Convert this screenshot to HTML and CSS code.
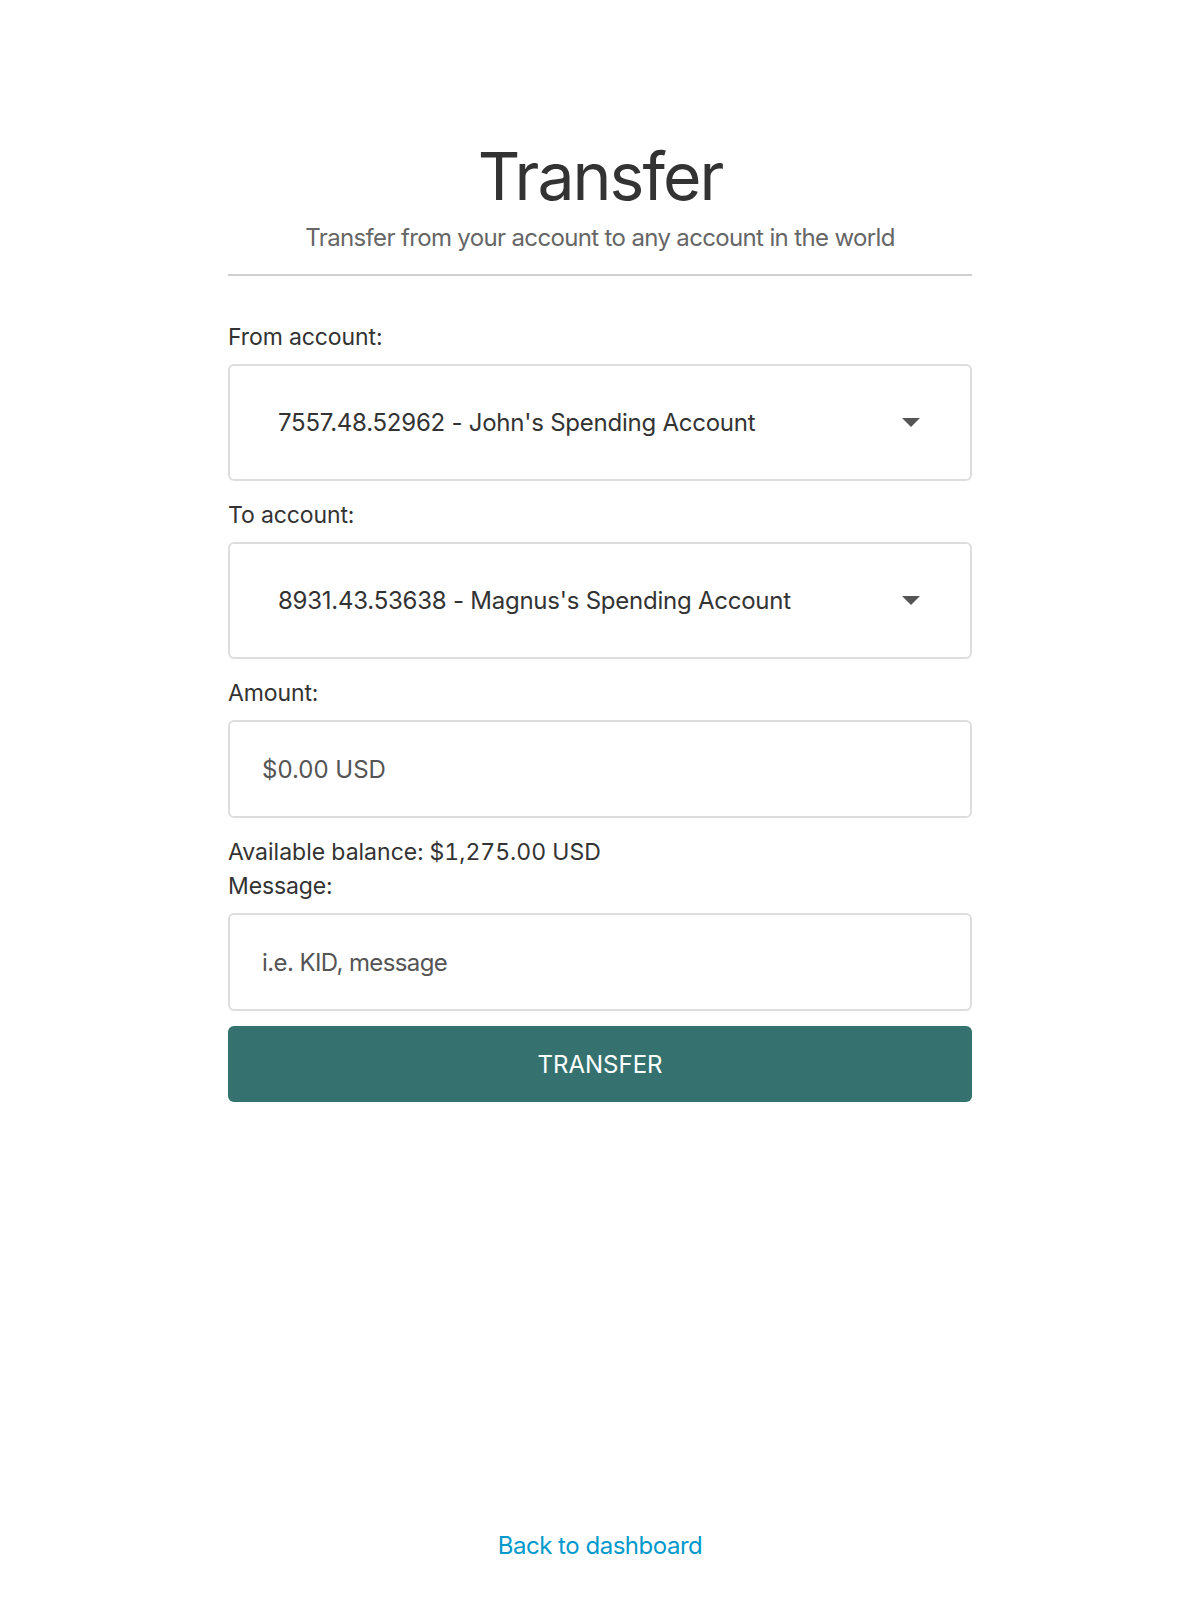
FILE: index.html
```html
<!DOCTYPE html>
<html lang="en">
<head>
<meta charset="utf-8">
<title>Transfer</title>
<link rel="stylesheet" href="styles.css">
</head>
<body>
<main class="page">
  <header class="head">
    <h1 class="title">Transfer</h1>
    <p class="subtitle">Transfer from your account to any account in the world</p>
  </header>
  <form class="form">
    <label class="label">From account:</label>
    <div class="select">
      <span class="select-text">7557.48.52962 - John's Spending Account</span>
      <svg class="caret" width="18" height="9" viewBox="0 0 18 9"><path d="M0 0H18L9 9Z" fill="#555"/></svg>
    </div>
    <label class="label">To account:</label>
    <div class="select">
      <span class="select-text">8931.43.53638 - Magnus's Spending Account</span>
      <svg class="caret" width="18" height="9" viewBox="0 0 18 9"><path d="M0 0H18L9 9Z" fill="#555"/></svg>
    </div>
    <label class="label">Amount:</label>
    <input class="input" type="text" placeholder="$0.00 USD">
    <p class="balance">Available balance: $1,275.00 USD</p>
    <label class="label">Message:</label>
    <input class="input input-msg" type="text" placeholder="i.e. KID, message">
    <button class="btn" type="button">TRANSFER</button>
  </form>
  <footer class="foot">
    <a class="back" href="#">Back to dashboard</a>
  </footer>
</main>
</body>
</html>
```
FILE: styles.css
```css
* { box-sizing: border-box; }
html, body { margin: 0; padding: 0; background: #fff; }
body {
  font-family: Inter, "Noto Sans", sans-serif;
  color: #333;
}
.page {
  width: 744px;
  margin: 0 auto;
  min-height: 1624px;
  display: flex;
  flex-direction: column;
  padding-top: 136px;
}
.head {
  text-align: center;
  border-bottom: 2px solid #d0d0d0;
  padding-bottom: 21px;
}
.title {
  margin: 0;
  font-size: 66px;
  font-weight: 400;
  letter-spacing: -0.03em;
  line-height: 80px;
  color: #333;
}
.subtitle {
  margin: 7px 0 0;
  font-size: 24px;
  letter-spacing: -0.027em;
  line-height: 30px;
  color: #666;
}
.form {
  display: flex;
  flex-direction: column;
  padding-top: 44px;
}
.label, .balance {
  display: block;
  margin: 0;
  font-size: 23px;
  letter-spacing: -0.005em;
  line-height: 34px;
  color: #333;
}
.balance {
  font-variant-numeric: tabular-nums;
  letter-spacing: 0;
}
.label { margin-bottom: 10px; }
.select {
  height: 117px;
  border: 2px solid #ddd;
  border-radius: 6px;
  display: flex;
  align-items: center;
  justify-content: space-between;
  padding: 0 50px 0 48px;
  margin-bottom: 17px;
}
.select-text {
  font-size: 24px;
  letter-spacing: -0.01em;
  color: #333;
}
.caret { display: block; }
.input {
  height: 98px;
  border: 2px solid #ddd;
  border-radius: 6px;
  padding: 0 32px;
  font-family: inherit;
  font-size: 24px;
  letter-spacing: 0;
  color: #333;
  margin: 0 0 17px;
  outline: none;
}
.input-msg {
  letter-spacing: -0.025em;
  margin-bottom: 15px;
}
.input::placeholder { color: #555; }
.btn {
  height: 76px;
  border: none;
  border-radius: 6px;
  background: #35726f;
  color: #fff;
  font-family: inherit;
  font-size: 24px;
  letter-spacing: 0;
  cursor: pointer;
}
.foot {
  margin-top: auto;
  text-align: center;
  padding-bottom: 64px;
}
.back {
  color: #0099cc;
  text-decoration: none;
  font-size: 24px;
  letter-spacing: -0.02em;
}
```
